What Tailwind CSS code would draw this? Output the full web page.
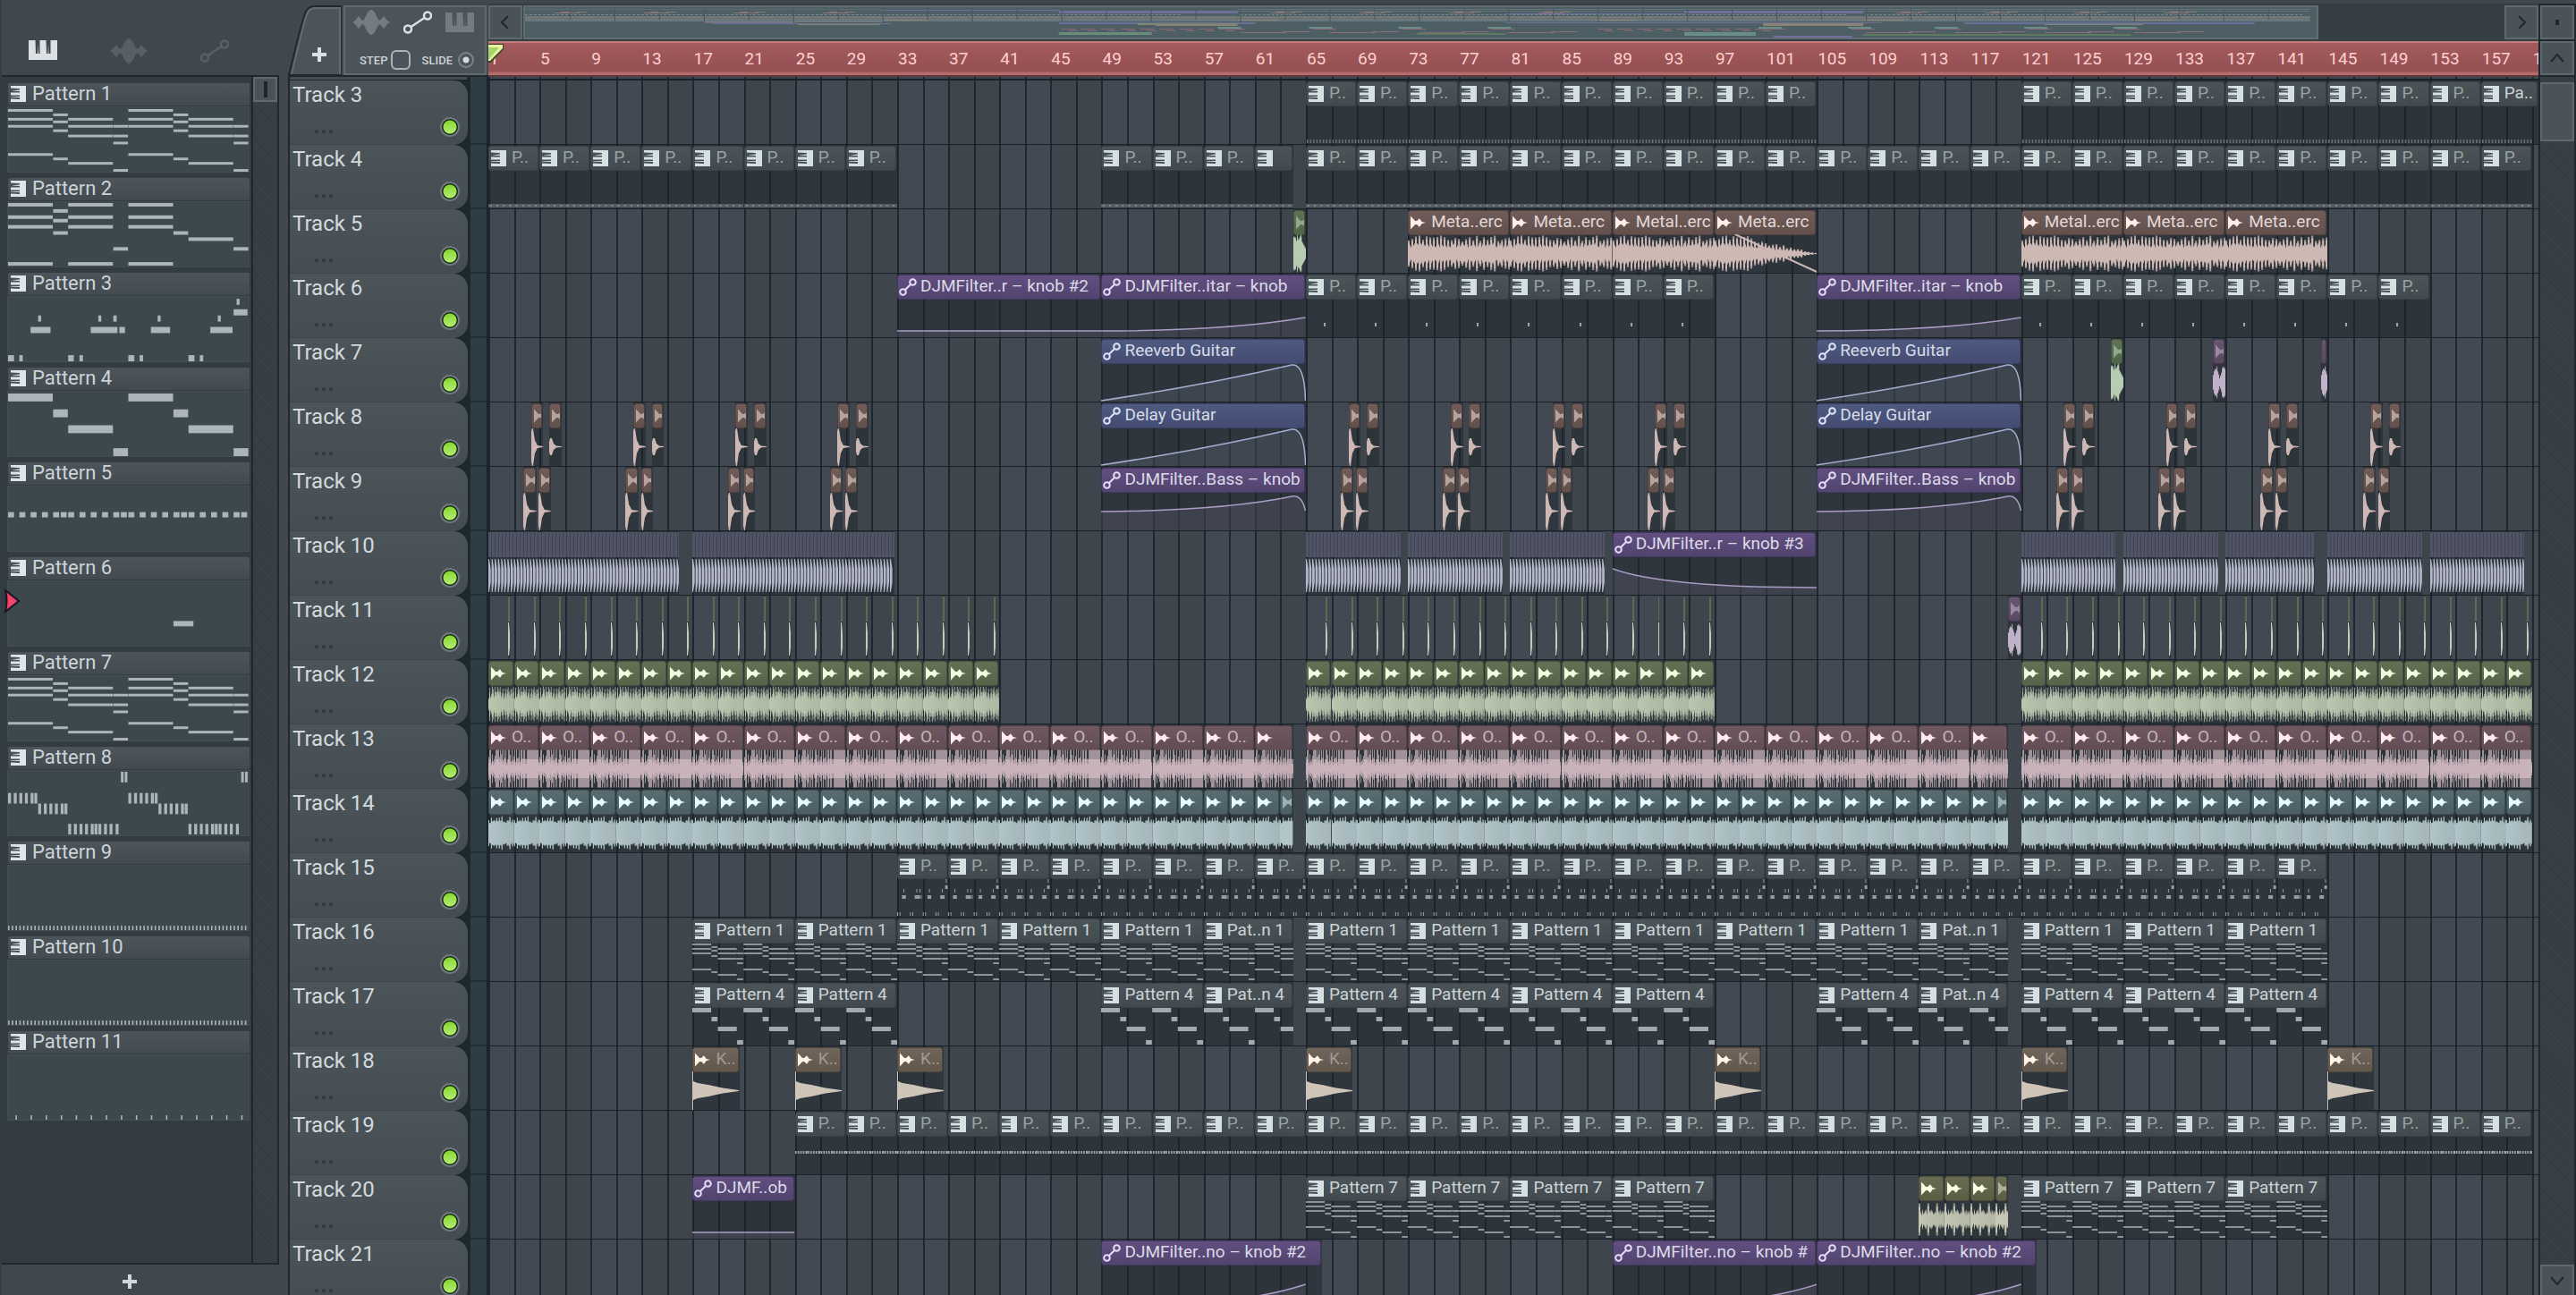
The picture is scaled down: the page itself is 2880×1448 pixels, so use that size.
<!DOCTYPE html>
<html lang="en">
<head>
  <meta charset="UTF-8">
  <meta name="viewport" content="width=device-width, initial-scale=1.0">
  <title>Playlist</title>
  <script src="https://cdn.jsdelivr.net/npm/@tailwindcss/browser@4"></script>
</head>

<body class="h-screen overflow-hidden bg-[#40484e] font-['Roboto',sans-serif] text-[#ccd4d8] flex">

  <!-- Shared icons -->
  <svg class="hidden">
    <symbol id="i-keys" viewBox="0 0 17 18" preserveAspectRatio="none">
      <path fill="currentColor" d="M0 0H17V18H0V14.6L10 15V13L0 12.4V12H10V10.5H0V7.5H10V6L2 5.6V5.2L10 4.6V3L0 2.6Z"/>
    </symbol>
    <symbol id="i-audio" viewBox="0 0 18 16">
      <path fill="currentColor" d="M0 0L5.500 6H7.500L10.500 3L13.500 7L18 8L13.500 9L10.500 13L7.500 10H5.500L0 16Z"/>
    </symbol>
    <symbol id="i-auto" viewBox="0 0 20 20">
      <g fill="none" stroke="currentColor" stroke-width="2"><circle cx="4.500" cy="15.500" r="3.300"/><circle cx="15.500" cy="4.500" r="3.300"/><path d="M7 13L13 7"/></g>
    </symbol>
    <symbol id="i-piano" viewBox="0 0 32 22">
      <path fill="currentColor" d="M0 0H7.500L8 15H10L10.500 5L11 15H12.500V0H19.500L20 15H21.500L22 5L22.500 15H24.500V0H32V22H0Z"/>
    </symbol>
    <symbol id="i-wave" viewBox="0 0 42 28">
      <path fill="currentColor" d="M0 14L3 12L7 7L11 12L13 11L17 3L20 0H22L25 3L29 11L31 12L35 7L39 12L42 14L39 16L35 21L31 16L29 17L25 25L22 28H20L17 25L13 17L11 16L7 21L3 16Z"/>
    </symbol>
    <symbol id="i-link" viewBox="0 0 32 26">
      <g fill="none" stroke="currentColor" stroke-width="2.500"><circle cx="5" cy="20.500" r="4"/><circle cx="27" cy="5.500" r="4"/><path d="M8.500 18L23.500 8"/></g>
    </symbol>
    <symbol id="i-plus" viewBox="0 0 16 16"><path fill="currentColor" d="M6 0H10V6H16V10H10V16H6V10H0V6H6Z"/></symbol>
  </svg>

  <!-- Pattern picker -->
  <aside class="w-[312px] shrink-0 flex flex-col border-l-2 border-[#363e45]">
    <nav class="h-[84px] flex items-end gap-[59px] pl-[30px] pb-[13px]">
      <button aria-label="Patterns"><svg class="w-8 h-[22px] mb-1 text-[#dbe0e4]"><use href="#i-piano"/></svg></button>
      <button aria-label="Audio clips"><svg class="w-[42px] h-7 text-[#566066]"><use href="#i-wave"/></svg></button>
      <button aria-label="Automation clips"><svg class="w-8 h-[26px] mb-px text-[#566066]"><use href="#i-link"/></svg></button>
    </nav>
    <div class="flex-1 min-h-0 flex border-y-2 border-r-2 border-[#1f282f]">
      <ul id="patterns" class="flex-1 bg-[#333c43] pt-[7px] pl-[6px] pr-[2px] overflow-hidden"></ul>
      <div class="w-[29px] border-l-2 border-[#1f282f] bg-[repeating-linear-gradient(45deg,#353d43_0_2px,#394147_2px_4px)]">
        <div class="h-7 border-2 border-[#5f686d] bg-[#4a5359] flex items-center justify-center"><span class="w-1 h-[18px] bg-[#1f282f]"></span></div>
      </div>
    </div>
    <button class="h-[34px] flex items-center justify-center pr-6 pt-2 pb-1 text-[#d0d6da]" aria-label="Add pattern"><svg class="size-4"><use href="#i-plus"/></svg></button>
  </aside>

  <!-- Playlist -->
  <main class="flex-1 min-w-0 ml-[10px] pt-1 flex flex-col">
    <header class="h-[82px] shrink-0 flex">
      <div class="w-[224px] shrink-0 flex gap-[2px] border-b-2 border-[#1f282f] pt-[2px]">
        <button class="relative w-[60px] flex justify-center pt-[47px] pl-[10px] text-[#dbe0e4]" aria-label="Add track">
          <svg class="absolute inset-0" width="60" height="78" viewBox="0 0 60 78"><path d="M1 78C6 58 12 32 18 12Q21 1 29 1H60V78Z" fill="#4b545a" stroke="#1f282f" stroke-width="2"/><path d="M4 77C8 60 15 30 20 13Q23 3 30 3H58V77" fill="none" stroke="#616b70" stroke-width="2"/></svg>
          <svg class="relative size-4"><use href="#i-plus"/></svg>
        </button>
        <div class="flex-1 bg-[#4b545a] border-2 border-[#616b70] mr-[2px] flex flex-col justify-between px-2 pt-[3px] pb-1">
          <div class="flex justify-between items-center pr-1">
            <button aria-label="Audio"><svg class="w-[42px] h-7 text-[#737d80]"><use href="#i-wave"/></svg></button>
            <button aria-label="Automation"><svg class="w-8 h-[26px] text-[#dbe0e4]"><use href="#i-link"/></svg></button>
            <button aria-label="Notes"><svg class="w-8 h-[22px] text-[#737d80]"><use href="#i-piano"/></svg></button>
          </div>
          <div class="flex items-center justify-between pl-2 pr-1 text-[13px] font-medium leading-none text-[#ccd3d6]">
            <label class="flex items-center gap-1">STEP <input type="checkbox" class="appearance-none w-[22px] h-[22px] border-2 border-[#adb5b9] rounded-md"></label>
            <label class="flex items-center gap-[6px]">SLIDE <input type="radio" checked class="appearance-none size-[18px] rounded-full border-2 border-[#7b8589] bg-[radial-gradient(circle,#d5dbdd_0_3px,transparent_4px)]"></label>
          </div>
        </div>
      </div>

      <div class="flex-1 min-w-0 flex flex-col">
        <div class="h-[42px] py-[2px] flex bg-[#363e45]">
          <button class="w-[38px] border-2 border-[#5f686d] bg-[#4a5359] text-[#1f282f] flex items-center justify-center mr-px" aria-label="Scroll left"><svg width="10" height="16" fill="none" stroke="currentColor" stroke-width="2"><path d="M8 1L1 8L8 15"/></svg></button>
          <div class="flex-1 min-w-0 flex">
            <svg id="overview" class="w-[90.6%] border-2 border-[#5f6d72] bg-[#4d5e64]" viewBox="0 0 2004 34" preserveAspectRatio="none"></svg>
          </div>
          <button class="w-[38px] border-2 border-[#5f686d] bg-[#4a5359] text-[#1f282f] flex items-center justify-center" aria-label="Scroll right"><svg width="10" height="16" fill="none" stroke="currentColor" stroke-width="2"><path d="M2 1L9 8L2 15"/></svg></button>
        </div>
        <div id="ruler" class="relative h-10 overflow-hidden border-t-2 border-t-[#c57c7c] border-b-2 border-b-[#563a40] bg-[linear-gradient(#a35b5d,#954f52_86%,#b86c6c_95%)]">
          <svg class="absolute left-0 top-[1px] z-10" width="20" height="22"><path d="M0 0H17V6L3 21H0Z" fill="#35442a"/><path d="M0 1H16V5L2 19H0Z" fill="#eaf3a0"/><path d="M0 4H12L1 17H0Z" fill="#a7d468"/></svg>
        </div>
      </div>

      <div class="w-[42px] shrink-0 px-[2px] pt-[2px] flex flex-col gap-[2px] bg-[#1f282f]">
        <button class="h-[38px] border-2 border-[#5f686d] bg-[#4a5359] flex items-center justify-center" aria-label="Zoom"><span class="w-1 h-[6px] bg-[#1f282f]"></span></button>
        <button class="h-[38px] border-2 border-[#5f686d] bg-[#4a5359] text-[#1f282f] flex items-center justify-center" aria-label="Scroll up"><svg width="16" height="10" fill="none" stroke="currentColor" stroke-width="2"><path d="M1 9L8 1L15 9"/></svg></button>
      </div>
    </header>

    <div class="flex-1 min-h-0 flex">
      <div class="w-[224px] shrink-0 overflow-hidden flex border-l-2 border-[#1f282f]">
        <div class="w-[202px] bg-[#1c272e]">
          <div class="h-[3px] mb-px mr-1 bg-[#454d53]"></div>
          <div id="heads"></div>
        </div>
        <div class="flex-1 bg-[#2e3c43] border-r-2 border-[#1a232a] bg-[repeating-linear-gradient(transparent_0_70px,#22303a_70px_72px)] bg-[position:0_4px]"></div>
      </div>
      <div id="lanes" class="relative flex-1 min-w-0 overflow-hidden bg-[#3e454d]"></div>
      <div class="w-[42px] shrink-0 flex flex-col border-x-2 border-[#1f282f] bg-[repeating-linear-gradient(45deg,#353d43_0_2px,#394147_2px_4px)]">
        <div class="mt-[6px] h-[66px] border-2 border-[#5f686d] bg-[#4a5359]"></div>
        <button class="mt-auto h-[34px] border-2 border-b-0 border-[#5f686d] bg-[#4a5359] text-[#1f282f] flex items-center justify-center" aria-label="Scroll down"><svg width="16" height="10" fill="none" stroke="currentColor" stroke-width="2"><path d="M1 1L8 9L15 1"/></svg></button>
      </div>
    </div>
  </main>

  <!-- Selected pattern marker -->
  <svg class="absolute left-[5px] top-[659px]" width="18" height="26"><path d="M1 1L16 13L1 25Q4 13 1 1Z" fill="#f04468" stroke="#15181d" stroke-width="2"/></svg>

  <script>
    const VISIBLE_BARS = 160.5;
    const BAR = 14.28; // drawing units per bar inside a clip
    const BODY_H = 43;

    const pct = b => ((b - 1) / VISIBLE_BARS * 100).toFixed(4);

    // note = [start, length] in sixteenths of the pattern, grouped by row offset (out of 73)
    const chordNotes = {
      h: 3,
      rows: [
        [3, [[0, 3], [8, 3]]], [8, [[3, 1], [11, 1]]],
        [13, [[0, 3], [4, 3], [8, 3], [12, 3]]], [16, [[3, 1], [11, 1]]],
        [21, [[0, 3], [4, 3], [7, 1], [8, 3], [12, 3], [15, 1]]], [26, [[3, 1], [11, 1]]],
        [32, [[4, 3], [7, 1], [12, 3], [15, 1]]], [40, [[7, 1], [15, 1]]],
        [53, [[0, 3], [8, 3]]], [58, [[3, 1], [11, 1]]], [63, [[4, 3], [12, 3]]], [71, [[7, 1], [15, 1]]],
      ],
    };
    const ticks = (list, len) => list.concat(list.map(x => x + 8)).map(x => [x, len]);
    const every = (n, len, off = 0) => Array.from({ length: n }, (_, i) => [off + i * 16 / n, len]);

    const notes = {
      1: chordNotes,
      2: { h: 4, rows: [
        [3, [[0, 3], [4, 3], [8, 3]]], [10, [[3, 1]]], [17, [[0, 3], [4, 3], [8, 3]]], [21, [[3, 1]]],
        [28, [[0, 3], [4, 3], [8, 3]]], [35, [[3, 1], [11, 1]]], [42, [[12, 3]]],
        [53, [[7, 1], [15, 1]]], [70, [[0, 3], [4, 3], [8, 3]]]] },
      3: { h: 7, rows: [
        [5, [[15.2, .22]]], [17, [[15, .95]]],
        [24, [[2, .22], [6, .22], [7, .25], [9.95, .22], [13.95, .22]]],
        [37, [[1.5, 1.35], [5.5, 1.8], [7.4, .4], [9.5, 1.3], [13.45, 1.5]]],
        [69, [[0, .42], [.75, .25], [4, .4], [4.75, .25], [8, .42], [8.75, .25], [12, .42], [12.75, .25]]]] },
      4: { h: 9, rows: [[6, [[0, 3], [8, 3]]], [24, [[3, 1], [11, 1]]], [42, [[4, 3], [12, 3]]], [68, [[7, 1], [15, 1]]]] },
      5: { h: 6, rows: [[32, ticks([0, .75, 1.5, 2.25, 3, 3.5, 4, 4.75, 5.5, 6.25, 7, 7.5], .42)]] },
      6: { h: 6, rows: [[48, [[11, 1.35]]]] },
      7: chordNotes,
      8: { h: 12, rows: [
        [7, ticks([7.5, 7.76], .2)], [31, ticks([0, .38, .75, 1.12, 1.5, 1.75], .22)],
        [43, ticks([2, 2.38, 2.75, 3.12, 3.5, 3.75], .22)],
        [66, ticks([4, 4.38, 4.75, 5.12, 5.5, 5.75, 6, 6.38, 6.75, 7.15], .22)]] },
      9: { h: 5, rows: [[70, every(64, .12)]] },
      10: { h: 5, rows: [[70, every(64, .12)]] },
      11: { h: 5, rows: [[70, every(16, .12, .5)]] },
    };

    function drawNotes(pattern, w, h) {
      const scale = h / 73;
      const nh = Math.max(2, Math.round(pattern.h * scale));
      let out = '';
      for (const [y, list] of pattern.rows) {
        for (const [s, len] of list) {
          out += `<rect x="${(s * w / 16).toFixed(1)}" y="${Math.round(y * scale - nh / 2)}" width="${Math.max(1, len * w / 16 - .4).toFixed(1)}" height="${nh}"/>`;
        }
      }
      return out;
    }

    // Pattern list
    document.getElementById('patterns').innerHTML = Object.keys(notes).map(n => `
      <li class="h-[106px]">
        <button class="block w-full text-left">
          <span class="flex items-start gap-[7px] h-[25px] pl-[3px] ml-px rounded-xs bg-linear-to-b from-[#4c555a] to-[#434b51]">
            <svg class="w-[17px] h-[18px] mt-[3px] text-[#dde6ea]"><use href="#i-keys"/></svg>
            <span class="text-[22px] leading-[23px]">Pattern ${n}</span>
          </span>
          <svg class="mt-px w-full h-[74px] bg-[#3d474e] border border-[#434d54]" viewBox="0 0 270 73" preserveAspectRatio="none" fill="#abb5bb">${drawNotes(notes[n], 270, 73)}</svg>
        </button>
      </li>`).join('');

    // Track heads
    let heads = '';
    for (let t = 3; t <= 21; t++) {
      heads += `
        <div class="h-[72px] w-[199px] rounded-r-2xl border-b border-[#3f474c] bg-linear-to-b from-[#4b5459] to-[#454d53] pl-[3px]">
          <p class="text-[24px] leading-8 text-[#d3d9dc]">Track ${t}</p>
          <div class="flex items-center justify-between pl-[25px] pr-[9px]">
            <span class="flex gap-1 pt-[18px]"><i class="size-1 bg-[#343b40]"></i><i class="size-1 bg-[#343b40]"></i><i class="size-1 bg-[#343b40]"></i></span>
            <input type="checkbox" checked aria-label="Track ${t} on" class="appearance-none mt-[9px] size-[22px] rounded-full border-2 border-[#6f7a7c] bg-[radial-gradient(circle,transparent_0_7px,#12240c_8px),linear-gradient(#7fd42a,#b9ef78)]">
          </div>
        </div>`;
    }
    document.getElementById('heads').innerHTML = heads;

    // Clip looks
    const looks = {
      pattern: { head: 'from-[#4b5459] to-[#424a4f] border-[#38414a]', ink: 'text-[#d5e0e4]', text: 'text-[#ccd4d6]', icon: 'keys' },
      green: { head: 'from-[#637157] to-[#56644a] border-[#46533e]', ink: 'text-[#eefbe0]', wave: '#bcc8b0', icon: 'audio' },
      leaf: { head: 'from-[#5e7455] to-[#516548] border-[#42553b]', ink: 'text-[#cfe3c8]', wave: '#b8ccb4', icon: 'audio' },
      pink: { head: 'from-[#70585f] to-[#624d54] border-[#533f46]', ink: 'text-[#ffeaf0]', text: 'text-[#c2b4ba]', wave: '#c9b3bb', icon: 'audio' },
      teal: { head: 'from-[#586c71] to-[#4c5f64] border-[#3e5156]', ink: 'text-[#e6fafd]', wave: '#b2c6ca', icon: 'audio' },
      brown: { head: 'from-[#705c58] to-[#62504c] border-[#54403c]', ink: 'text-[#ffeee8]', text: 'text-[#e0d8d6]', wave: '#cdb8b4', icon: 'audio' },
      kick: { head: 'from-[#70655a] to-[#61574d] border-[#54483c]', ink: 'text-[#fff3e4]', text: 'text-[#a09a92]', wave: '#cfc4b8', icon: 'audio' },
      olive: { head: 'from-[#696c51] to-[#5b5e45] border-[#4b4e3a]', ink: 'text-[#fbfce4]', wave: '#c6c8b4', icon: 'audio' },
      plum: { head: 'from-[#665670] to-[#594a62] border-[#4a3c54]', ink: 'text-[#cfc2d6]', wave: '#bfb2ca', icon: 'audio' },
      purple: { head: 'from-[#604f80] to-[#524370] border-[#44365f]', ink: 'text-[#e6dcfa]', text: 'text-[#dcdae6]', line: '#a99cc6', icon: 'auto' },
      blue: { head: 'from-[#4f5a82] to-[#434d72] border-[#384164]', ink: 'text-[#dfe6fa]', text: 'text-[#d6dce6]', line: '#a4aed0', icon: 'auto' },
    };

    const clips = [];
    function add(track, look, start, end, label, body, opt = {}) {
      clips.push({ track, look, start, end, label, body, ...opt });
    }
    function run(track, look, start, end, step, label, body, opt) {
      for (let s = start; s < end; s += step) {
        const cut = s + step > end;
        add(track, look, s, Math.min(end, s + step), cut && opt && opt.cut !== undefined ? opt.cut : label, body, opt);
      }
    }

    run(3, 'pattern', 65, 105, 4, 'P..', 'comb');
    run(3, 'pattern', 121, 157, 4, 'P..', 'comb');
    add(3, 'pattern', 157, 161.5, 'Pa..', 'comb');
    run(4, 'pattern', 1, 33, 4, 'P..', 'strip');
    run(4, 'pattern', 49, 64, 4, 'P..', 'strip', { cut: '' });
    run(4, 'pattern', 65, 161, 4, 'P..', 'strip');
    add(5, 'leaf', 64, 65, '', 'burst');
    [[73, 'Meta..erc'], [81, 'Meta..erc'], [89, 'Metal..erc'], [97, 'Meta..erc'], [121, 'Metal..erc'], [129, 'Meta..erc'], [137, 'Meta..erc']]
      .forEach(([s, l]) => add(5, 'brown', s, s + 8, l, s == 97 ? 'fade' : 'metal'));
    add(6, 'purple', 33, 49, 'DJMFilter..r – knob #2', 'flat');
    for (const s of [49, 105]) {
      add(6, 'purple', s, s + 16, 'DJMFilter..itar – knob', 'rise');
      add(7, 'blue', s, s + 16, 'Reeverb Guitar', 'ramp');
      add(8, 'blue', s, s + 16, 'Delay Guitar', 'ramp');
      add(9, 'purple', s, s + 16, 'DJMFilter..Bass – knob', 'bump');
    }
    run(6, 'pattern', 65, 97, 4, 'P..', 'dot');
    run(6, 'pattern', 121, 153, 4, 'P..', 'dot');
    add(7, 'leaf', 128, 129, '', 'burst');
    add(7, 'plum', 136, 137, '', 'double');
    add(7, 'plum', 144.5, 145, '', 'double', { noIcon: true });
    for (const k of [0, 1, 2, 3, 8, 9, 10, 11, 15, 16, 17, 18]) {
      add(8, 'brown', 4.34 + k * 8, 5.3 + k * 8, '', 'hit', { dim: true });
      add(8, 'brown', 5.78 + k * 8, 6.75 + k * 8, '', 'tap', { dim: true });
      add(9, 'brown', 3.74 + k * 8, 4.75 + k * 8, '', 'hit', { dim: true });
      add(9, 'brown', 4.94 + k * 8, 5.9 + k * 8, '', 'hit', { dim: true });
    }
    [[1, 15.9], [17, 32.8], [65, 72.4], [73, 80.4], [81, 88.4], [121, 128.4], [129, 136.4], [137, 144], [145, 152.4], [153, 160.4]]
      .forEach(([s, e]) => add(10, 'hats', s, e, '', 'hats'));
    add(10, 'purple', 89, 105, 'DJMFilter..r – knob #3', 'fall');
    for (const [s, n] of [[2.56, 20], [66.56, 16], [122.56, 20]])
      for (let i = 0; i < n; i++) add(11, 'snap', s + i * 2, s + i * 2 + .14, '', 'snap');
    add(11, 'plum', 120, 121, '', 'double', { dim: true });
    for (const [s, e] of [[1, 41], [65, 97], [121, 161]]) run(12, 'green', s, e, 2, '', 'loop');
    for (const [s, e] of [[1, 64], [65, 120], [121, 161]]) {
      run(13, 'pink', s, e, 4, 'O..', 'full', { cut: '' });
      run(14, 'teal', s, e, 2, '', 'dense');
    }
    run(15, 'pattern', 33, 145, 4, 'P..', 'n3');
    for (const [s, e] of [[17, 64], [65, 120], [121, 145]]) run(16, 'pattern', s, e, 8, 'Pattern 1', 'n1', { cut: 'Pat..n 1' });
    for (const [s, e] of [[17, 33], [49, 64], [65, 97], [105, 120], [121, 145]]) run(17, 'pattern', s, e, 8, 'Pattern 4', 'n4', { cut: 'Pat..n 4' });
    for (const s of [17, 25, 33, 65, 97, 121, 145]) add(18, 'kick', s, s + 3.65, 'K..', 'boom');
    run(19, 'pattern', 25, 161, 4, 'P..', 'beads');
    add(20, 'purple', 17, 25, 'DJMF..ob', 'flat');
    for (const [s, e] of [[65, 97], [121, 145]]) run(20, 'pattern', s, e, 8, 'Pattern 7', 'n1');
    run(20, 'olive', 113, 120, 2, '', 'perc');
    add(21, 'purple', 49, 66.25, 'DJMFilter..no – knob #2', 'late');
    add(21, 'purple', 89, 105, 'DJMFilter..no – knob #', 'late');
    add(21, 'purple', 105, 122.25, 'DJMFilter..no – knob #2', 'late');

    // small repeatable noise
    function rnd(i) {
      const v = Math.sin(i * 127.1 + 11.7) * 43758.5453;
      return v - Math.floor(v);
    }

    function spikes(w, color, amp, core) {
      let d = '', mid = '';
      for (let x = 0; x < w; x++) {
        const a = amp(x);
        d += `M${x + .5} ${(21.5 - a).toFixed(1)}V${(21.5 + a).toFixed(1)}`;
        mid += `M${x + .5} ${(21.5 - a * core).toFixed(1)}V${(21.5 + a * core).toFixed(1)}`;
      }
      return `<path d="${d}" stroke="${color}" stroke-opacity=".75"/><path d="${mid}" stroke="${color}"/>`;
    }
    function curve(w, line, color) {
      return `<path d="${line}V${BODY_H}H0Z" fill="${color}" fill-opacity=".14"/><path d="${line}" fill="none" stroke="${color}" stroke-width="1.5"/>`;
    }

    function body(c, w) {
      const look = looks[c.look] || {};
      const n = '#a1aab0';
      let out = '';
      switch (c.body) {
        case 'comb':
          for (let x = 1; x < Math.min(w, 4 * BAR); x += BAR / 4) out += `<rect x="${x.toFixed(1)}" y="38" width="1.5" height="4" fill="#68727a"/>`;
          return out;
        case 'strip':
          out = `<rect y="38" width="${w}" height="4" fill="#545d64"/>`;
          for (let x = 2; x < w; x += BAR / 2) out += `<rect x="${x.toFixed(1)}" y="39" width="2" height="2" fill="#7d868c"/>`;
          return out;
        case 'dot': return `<rect x="20" y="27" width="2" height="4" fill="${n}"/>`;
        case 'beads':
          for (let x = 0, i = 0; x < w; x += BAR / 5, i++) out += `<rect x="${x.toFixed(1)}" y="17" width="${i % 5 == 4 ? 2.4 : 1.6}" height="3" fill="${n}"/>`;
          return out;
        case 'n3': return `<g fill="#949da3">${drawNotes(notes[3], 4 * BAR, 42)}</g>`;
        case 'n1': return `<g fill="#8b949b">${drawNotes(notes[1], 8 * BAR, 42)}</g>`;
        case 'n4': return `<g fill="${n}">${drawNotes(notes[4], 8 * BAR, 42)}</g>`;
        case 'flat': return curve(w, `M0 36H${w}`, look.line);
        case 'rise': return curve(w, `M0 36Q${w * .62} 36 ${w} 21`, look.line);
        case 'ramp': return curve(w, `M0 42Q${w * .5} 25 ${w - 15} 2Q${w - 1} 0 ${w} 42`, look.line);
        case 'bump': return curve(w, `M0 22Q${w * .6} 21 ${w - 15} 5Q${w - 4} 3 ${w} 21`, look.line);
        case 'fall': return curve(w, `M0 14Q${w * .25} 35 ${w} 35`, look.line);
        case 'late': {
          const x = 16 * BAR;
          return curve(w, `M0 42H${x * .4}Q${x * .75} 41 ${x} 22`, look.line);
        }
        case 'metal':
        case 'fade':
          out = spikes(w, look.wave, x => {
            let a = x % 4 < 2 ? 13 + 7 * rnd((x >> 2) + 5) : 7 + 5 * rnd(x);
            if (c.body == 'fade' && x > w * .3) a *= Math.max(.04, 1 - (x - w * .3) / (w * .7));
            return a;
          }, .85);
          if (c.body == 'fade') out += `<path d="M${w * .2} 0L${w} 42" stroke="${look.wave}" stroke-width="2"/>`;
          return out;
        case 'burst': return spikes(w, look.wave, x => (x < w * .6 ? 14 + 7 * rnd(x) : 15 - (x - w * .6) * 2), .9);
        case 'double': return spikes(w, look.wave, x => 3 + 16 * Math.abs(Math.sin((x + 1) * Math.PI * 1.7 / 14)) * (.7 + .3 * rnd(x)), .9);
        case 'hit': return `<path d="M0 4L1 1L2 1L4 14L7 20L${w} 21V22L7 23L4 29L2 43H1L0 38Z" fill="${look.wave}"/>`;
        case 'tap': return `<path d="M0 16L1 12H3L5 18L8 20.500L${w} 21V22L8 22.500L5 25L3 31H1L0 27Z" fill="${look.wave}"/>`;
        case 'loop': return spikes(w, look.wave, x => (x % 3 == 1 ? 16 + 4 * rnd(x) : 6 + 11 * rnd(x + 3)), .7);
        case 'full': return spikes(w, look.wave, x => (rnd(x + 40) > .45 ? 21 : 6 + 10 * rnd(x)), .5);
        case 'dense': return spikes(w, look.wave, x => 11 + 8 * rnd(x + 80) * (x % 3 ? .5 : 1), .95);
        case 'perc': return spikes(w, look.wave, x => (x % 10 < 2 ? 18 : 5 + 6 * rnd(x)), .8);
        case 'boom': return `<path d="M0 0H1V11L6 13L18 15L34 18.500L${w} 21V22L34 24.500L18 28L6 30L1 32V43H0Z" fill="${look.wave}"/>`;
        case 'hats':
          for (let x = 0; x < w - 2; x += BAR / 4) {
            const a = x.toFixed(1), b = (x + 1).toFixed(1), e = (x + 2.7).toFixed(1);
            out += `<path d="M${a} 3H${b}L${e} 14V29L${b} 40H${a}Z" fill="#b5b8ca"/>`;
          }
          return out;
        case 'snap': return `<path d="M0 2H1L${w} 14V30L1 39H0Z" fill="#c2ccb6"/>`;
      }
      return '';
    }

    function clipHtml(c) {
      const w = Math.max(2, Math.round((c.end - c.start) * BAR));
      let head;
      if (c.look == 'hats') {
        head = '<div class="h-7 mt-px bg-[repeating-linear-gradient(90deg,#505466_0_3px,#414552_3px_4px)]"></div>';
      } else if (c.look == 'snap') {
        head = '<div class="h-7 mt-px bg-[#5d6b50]"></div>';
      } else {
        const look = looks[c.look];
        const faint = c.dim || w < 20 ? 'opacity-50' : '';
        const size = look.icon == 'auto' ? 'size-5 ml-px' : 'w-[17px] h-[18px] ml-[2px]';
        const gap = look.icon == 'auto' ? 'gap-[4px]' : 'gap-[6px]';
        const tone = c.label == 'P..' ? 'text-[#99a3a7]' : (look.text || '');
        const label = c.label ? `<span class="whitespace-nowrap text-[19px] leading-6 pb-[3px] ${tone}">${c.label}</span>` : '';
        const icon = c.noIcon ? '' : `<svg class="shrink-0 ${size} ${look.ink} ${faint}"><use href="#i-${look.icon}"/></svg>`;
        head = `<div class="h-7 mt-px mr-px flex items-center ${gap} overflow-hidden rounded-[3px] border bg-linear-to-b ${look.head}">${icon}${label}</div>`;
      }
      return `<div class="absolute top-0 h-[71px] overflow-hidden bg-[#1c2427]/50" style="left:${pct(c.start)}%;width:${pct(c.end - c.start + 1)}%">${head}<svg class="block w-full min-w-[2px] h-[43px] -mt-px" viewBox="0 0 ${w} 43" preserveAspectRatio="none">${body(c, w)}</svg></div>`;
    }

    // Grid behind the clips
    let grid = '';
    for (let b = 1; b < 162; b += 8) grid += `<div class="absolute inset-y-0 bg-[#434952]" style="left:${pct(b)}%;width:${pct(5)}%"></div>`;
    for (let b = 1; b < 162; b += 2) grid += `<div class="absolute inset-y-0 w-[2px] bg-[#1e262e]" style="left:${pct(b)}%"></div>`;
    grid += '<div class="relative h-1 border-b-2 border-[#1a2128]"></div>';

    let rows = '';
    for (let t = 3; t <= 21; t++) {
      rows += `<div class="relative h-[72px] border-b border-[#1a2128]">${clips.filter(c => c.track == t).map(clipHtml).join('')}</div>`;
    }
    document.getElementById('lanes').innerHTML = grid + rows;

    // Ruler numbers
    let nums = '';
    for (let b = 1; b <= 161; b += 4)
      nums += `<span class="absolute top-0 leading-9 text-[19px] text-[#ffcfcf] pl-px" style="left:${pct(b)}%">${b}</span>`;
    document.getElementById('ruler').insertAdjacentHTML('beforeend', nums);

    // Overview strip: [x, width, y, height, colour]
    const mini = [];
    for (const [s, e] of [[0, 797], [797, 1497], [1497, 1997]]) mini.push([s, e - s, 10, 2, '#75837a'], [s, e - s, 12, 2, '#7c777e'], [s, e - s, 14, 2, '#6d8085']);
    mini.push([0, 400, 2, 1, '#5f7075'], [797, 1200, 2, 1, '#6a777c'], [797, 1200, 4, 1, '#64757a']);
    for (const k of [0, 1, 2, 3, 8, 9, 10, 11, 15, 16, 17, 18]) mini.push([33 + k * 100, 28, 6, 1, '#9a7b76'], [40 + k * 100, 12, 5, 1, '#9a7b76'], [58 + k * 100, 12, 5, 1, '#9a7b76']);
    mini.push([597, 200, 4, 3, '#7a73a8'], [1297, 200, 4, 3, '#7a73a8'], [398, 200, 3, 1, '#7a73a8'], [1097, 200, 7, 1, '#7a73a8']);
    mini.push([200, 100, 16, 1, '#84817b'], [300, 100, 16, 1, '#84817b'], [400, 50, 14, 1, '#9a8e76'], [797, 46, 14, 1, '#9a8e76'], [1197, 46, 14, 1, '#9a8e76'], [1497, 46, 14, 1, '#9a8e76'], [1797, 46, 14, 1, '#9a8e76']);
    mini.push([200, 100, 17, 1, '#7a73a8'], [210, 200, 18, 1, '#6e76a8'], [305, 92, 19, 1, '#8f9076'], [597, 220, 17, 2, '#6e76a8'], [1097, 420, 17, 1, '#7a73a8'], [1610, 325, 17, 2, '#6e76a8'], [685, 112, 18, 2, '#8f9076'], [705, 92, 20, 1, '#9a8e76'], [1385, 112, 18, 3, '#9a8e76'], [1700, 110, 19, 1, '#8f9076']);
    for (const x of [775, 877, 977, 1077, 1380, 1480, 1577, 1677, 1777]) mini.push([x, 26, 22, 2, '#6f9a90'], [x + 4, 26, 24, 1, '#9a707c']);
    for (let x = 600; x < 780; x += 22) mini.push([x, 16, 24, 1, '#9a707c'], [x + 8, 10, 26, 1, '#9a707c']);
    for (let x = 1200; x < 1380; x += 22) mini.push([x, 16, 24, 1, '#9a707c'], [x + 8, 10, 26, 1, '#9a707c']);
    for (const x of [800, 900, 1000, 1100, 1500, 1600, 1700, 1800]) mini.push([x, 52, 28, 1, '#9a707c'], [x + 48, 30, 27, 1, '#9a707c']);
    mini.push([597, 104, 28, 3, '#6f9a80'], [997, 100, 29, 2, '#64805f'], [1297, 80, 28, 4, '#6f9a90'], [1497, 300, 30, 2, '#64805f'], [1397, 88, 32, 2, '#7a73a8']);
    let mm = mini.map(([x, w, y, h, c]) => `<rect x="${x}" y="${y}" width="${w}" height="${h}" fill="${c}"/>`).join('');
    mm += '<path d="M0 8.500H735M800 8.500H1480M1500 8.500H1990" stroke="#8b98a4" stroke-dasharray="3 2" stroke-width="1"/>';
    for (let x = 50; x < 2000; x += 50) mm += `<rect x="${x}" y="2" width="1" height="${x % 100 ? 12 : 15}" fill="#46565c"/>`;
    document.getElementById('overview').innerHTML = `<g opacity=".8">${mm}</g>`;
  </script>

</body>
</html>
